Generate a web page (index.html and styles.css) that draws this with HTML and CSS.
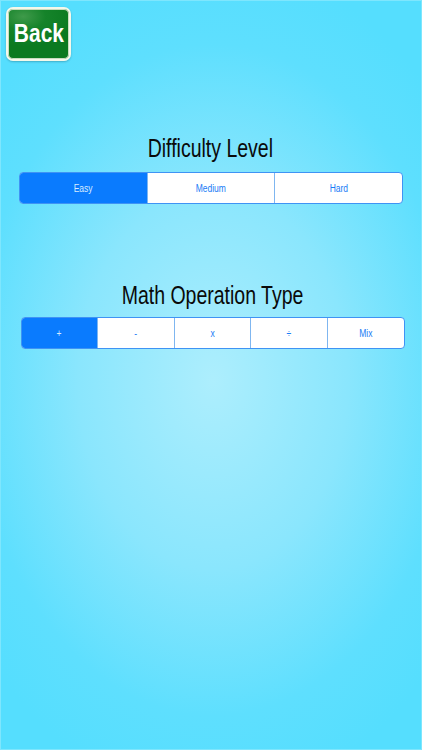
FILE: index.html
```html
<!DOCTYPE html>
<html>
<head>
<meta charset="utf-8">
<link rel="stylesheet" href="styles.css">
</head>
<body>
<div class="screen">
  <div class="topbar">
    <div class="back"><span class="back-label">Back</span></div>
  </div>
  <section class="group group-difficulty">
    <h2 class="title"><span>Difficulty Level</span></h2>
    <div class="segmented seg-difficulty">
      <div class="seg active"><span>Easy</span></div>
      <div class="seg"><span>Medium</span></div>
      <div class="seg"><span>Hard</span></div>
    </div>
  </section>
  <section class="group group-ops">
    <h2 class="title"><span>Math Operation Type</span></h2>
    <div class="segmented seg-ops">
      <div class="seg active"><span>+</span></div>
      <div class="seg"><span>-</span></div>
      <div class="seg"><span>x</span></div>
      <div class="seg"><span>÷</span></div>
      <div class="seg"><span>Mix</span></div>
    </div>
  </section>
</div>
</body>
</html>
```
FILE: styles.css
```css
html, body {
  margin: 0;
  padding: 0;
  height: 100%;
}
body {
  font-family: "Liberation Sans", Arial, sans-serif;
  background: radial-gradient(ellipse 300px 420px at 213px 380px, #adeefd 0%, #8ae6fd 45%, #5edffe 80%, #55defe 100%);
  overflow: hidden;
}
.screen {
  width: 422px;
  height: 750px;
  box-sizing: border-box;
  border: 1px solid #7ee6fd;
}
.topbar {
  padding: 6px 0 0 5px;
  height: 62px;
  box-sizing: border-box;
}
.back {
  width: 65px;
  height: 54px;
  box-sizing: border-box;
  border: 2px solid #f4f8ea;
  border-radius: 7px;
  background: radial-gradient(ellipse 50px 30px at 25% 15%, #3f9a4a 0%, #15832a 45%, #0b7a20 100%);
  box-shadow: 0 0 0 1px #c9dcc0 inset, 0 1px 2px rgba(0,60,80,0.3);
  display: flex;
  align-items: center;
  justify-content: center;
}
.back-label {
  color: #ffffff;
  font-weight: bold;
  font-size: 25px;
  display: inline-block;
  transform: scaleX(0.84);
  margin-top: -1px;
}
.group {
  display: flex;
  flex-direction: column;
  align-items: center;
}
.group-difficulty {
  margin-top: 70px;
}
.group-ops {
  margin-top: 76px;
}
.title {
  margin: 0;
  font-weight: normal;
  font-size: 25px;
  line-height: 30px;
  color: #0a0a0a;
  height: 30px;
}
.title span {
  display: inline-block;
  transform: scaleX(0.78);
}
.group-difficulty .title { margin-left: -1px; }
.group-ops .title { margin-left: 3px; }
.segmented {
  display: flex;
  height: 32px;
  box-sizing: border-box;
  border: 1px solid #3f93f4;
  border-radius: 4px;
  overflow: hidden;
  background: #ffffff;
}
.seg-difficulty {
  width: 384px;
  margin-top: 9px;
}
.seg-ops {
  width: 384px;
  margin-top: 7px;
  margin-left: 3px;
}
.seg {
  flex: 1;
  display: flex;
  align-items: center;
  justify-content: center;
  color: #1a7cf6;
  font-size: 10px;
  border-left: 1px solid #7fb6f0;
}
.seg:first-child {
  border-left: none;
}
.seg span {
  display: inline-block;
  transform: scaleX(0.85);
}
.seg.active {
  background: #0a7bfe;
  color: #d8ecff;
}
```
